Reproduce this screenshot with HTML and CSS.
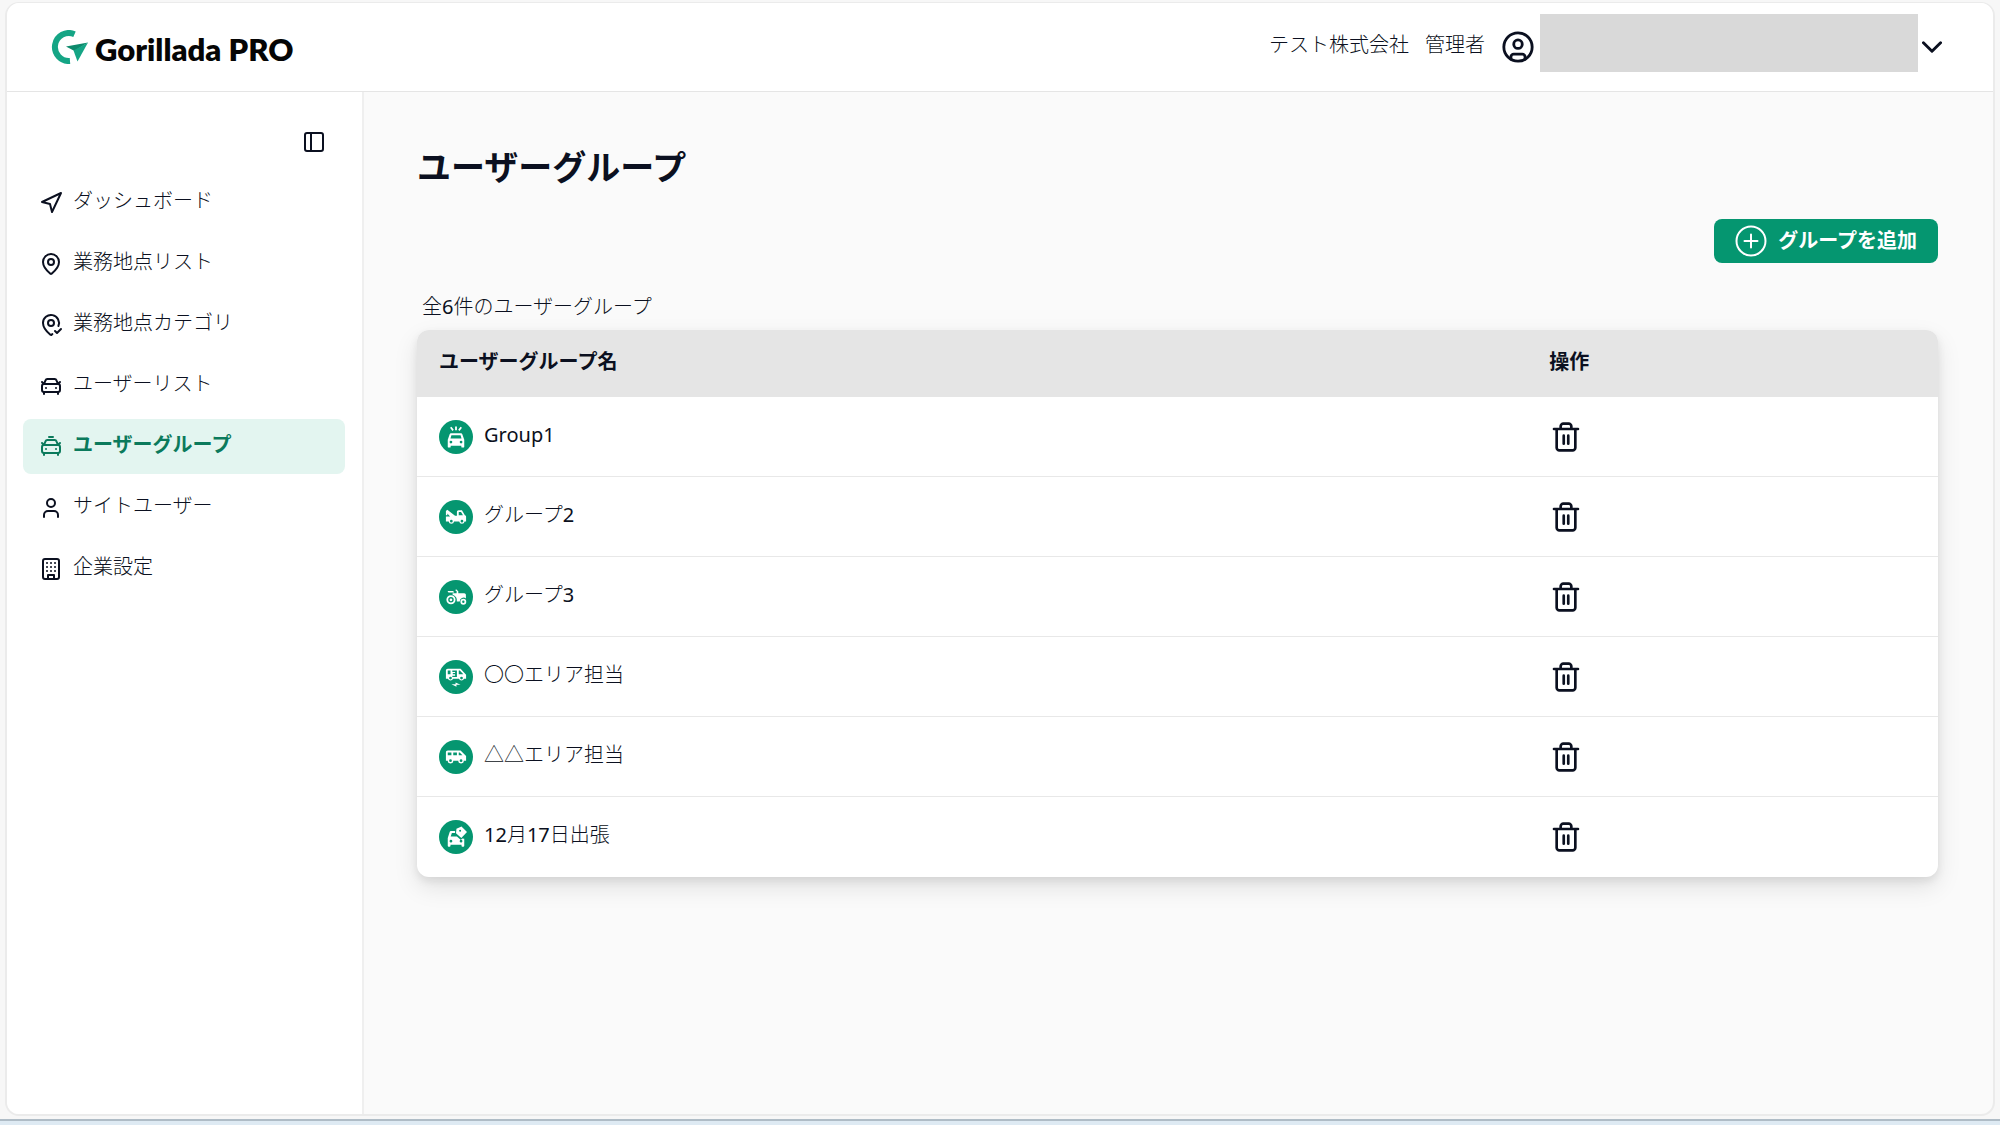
FILE: index.html
```html
<!DOCTYPE html>
<html lang="ja">
<head>
<meta charset="utf-8">
<meta name="viewport" content="width=device-width, initial-scale=1">
<title>ユーザーグループ | Gorillada PRO</title>
<link rel="stylesheet" href="styles.css">
</head>
<body>
<svg class="defs" aria-hidden="true">
  <symbol id="trash" viewBox="0 0 24 24">
    <path d="M3 6h18M19 6v14c0 1-1 2-2 2H7c-1 0-2-1-2-2V6M8 6V4c0-1 1-2 2-2h4c1 0 2 1 2 2v2M10.3 11v6M13.7 11v6"/>
  </symbol>
</svg>
<div class="frame">
  <header class="topbar">
    <a class="brand" href="#">
      <svg class="brand-mark" viewBox="0 0 38 34" aria-hidden="true">
        <path d="M24.500 4.200A14 14 0 1 0 20 31" fill="none" stroke="#15a585" stroke-width="6"/>
        <path d="M38 12.500 16 16.500l8.500 4.500z" fill="#0d8a6c"/>
        <path d="M38 12.500 23.500 20.500 27.500 31.500z" fill="#15a585"/>
      </svg>
      <span class="brand-name">Gorillada PRO</span>
    </a>
    <div class="account">
      <span class="label">テスト株式会社</span>
      <span class="label">管理者</span>
      <button class="account-menu" type="button" aria-label="アカウントメニュー">
        <svg class="avatar line" viewBox="0 0 24 24" aria-hidden="true"><circle cx="12" cy="12" r="10"/><circle cx="12" cy="10" r="3"/><path d="M7 20.660V19a2 2 0 0 1 2-2h6a2 2 0 0 1 2 2v1.660"/></svg>
        <span class="masked"></span>
        <svg class="chevron line" viewBox="5 8 14 8" aria-hidden="true"><path d="m6 9 6 6 6-6"/></svg>
      </button>
    </div>
  </header>
  <div class="body">
    <aside class="sidebar">
      <button class="collapse" type="button" aria-label="サイドバーを閉じる">
        <svg class="icon line" viewBox="0 0 24 24" aria-hidden="true"><rect x="3" y="3" width="18" height="18" rx="2"/><path d="M9 3v18"/></svg>
      </button>
      <nav class="menu">
        <a href="#"><svg class="icon line" viewBox="0 0 24 24" aria-hidden="true"><path d="m3 11 19-9-9 19-2-8z"/></svg><span class="label">ダッシュボード</span></a>
        <a href="#"><svg class="icon line" viewBox="0 0 24 24" aria-hidden="true"><path d="M20 10c0 5-5.500 10.200-7.400 11.800a1 1 0 0 1-1.200 0C9.500 20.200 4 15 4 10a8 8 0 0 1 16 0"/><circle cx="12" cy="10" r="3"/></svg><span class="label">業務地点リスト</span></a>
        <a href="#"><svg class="icon line" viewBox="0 0 24 24" aria-hidden="true"><path d="M19.400 13A8 8 0 1 0 4 10c0 5 5.500 10.200 7.400 11.800.4.3.9.3 1.200 0l.8-.7"/><circle cx="12" cy="10" r="3"/><path d="m16 18 2 2 4-4"/></svg><span class="label">業務地点カテゴリ</span></a>
        <a href="#"><svg class="icon line" viewBox="0 0 24 24" aria-hidden="true"><path d="m21 8-2 2-1.500-3.700A2 2 0 0 0 15.600 5H8.400a2 2 0 0 0-1.900 1.260L5 10 3 8M7 14h.01M17 14h.01M5 18v2M19 18v2"/><rect x="3" y="10" width="18" height="8" rx="2"/></svg><span class="label">ユーザーリスト</span></a>
        <a class="active" href="#" aria-current="page"><svg class="icon line" viewBox="0 0 24 24" aria-hidden="true"><path d="M10 2h4M21 8l-2 2-1.500-3.700A2 2 0 0 0 15.600 5H8.400a2 2 0 0 0-1.900 1.260L5 10 3 8M7 14h.01M17 14h.01M5 18v2M19 18v2"/><rect x="3" y="10" width="18" height="8" rx="2"/></svg><span class="label">ユーザーグループ</span></a>
        <a href="#"><svg class="icon line" viewBox="0 0 24 24" aria-hidden="true"><path d="M19 21v-2a4 4 0 0 0-4-4H9a4 4 0 0 0-4 4v2"/><circle cx="12" cy="7" r="4"/></svg><span class="label">サイトユーザー</span></a>
        <a href="#"><svg class="icon line" viewBox="0 0 24 24" aria-hidden="true"><rect x="4" y="2" width="16" height="20" rx="2"/><path d="M9 22v-4h6v4M8 6h.01M16 6h.01M12 6h.01M12 10h.01M12 14h.01M16 10h.01M16 14h.01M8 10h.01M8 14h.01"/></svg><span class="label">企業設定</span></a>
      </nav>
    </aside>
    <main class="content">
      <h1>ユーザーグループ</h1>
      <div class="actions">
        <button class="add" type="button">
          <svg class="add-icon" viewBox="0 0 32 32" aria-hidden="true"><circle cx="16" cy="16" r="14.500"/><path d="M16 9.500v13M9.500 16h13"/></svg>
          グループを追加
        </button>
      </div>
      <p class="count">全<span class="latin">6</span>件のユーザーグループ</p>
      <table class="groups">
        <thead>
          <tr><th class="name-col" scope="col"><span class="label">ユーザーグループ名</span></th><th scope="col"><span class="label">操作</span></th></tr>
        </thead>
        <tbody>
          <tr>
            <td><div class="group"><span class="badge"><svg viewBox="0 0 24 24" aria-hidden="true"><path fill-rule="evenodd" d="M18.900 9c-.2-.6-.8-1-1.400-1h-11c-.7 0-1.200.4-1.400 1L3 15v7.500c0 .6.400 1 1 1h1.200c.6 0 1-.4 1-1V21.500h11.600v1c0 .6.400 1 1 1H20c.6 0 1-.4 1-1V15zM7 10h10l1 3.500H6zM6.500 19a1.500 1.500 0 1 1 0-3 1.500 1.500 0 0 1 0 3zm11 0a1.500 1.500 0 1 1 0-3 1.500 1.500 0 0 1 0 3zM11 .5h2v4h-2zM5.500 2 7 .9l2.600 3.300L8.100 5.400zM18.500 2 17 .9l-2.600 3.300 1.500 1.200z"/></svg></span><span class="label"><span class="latin">Group1</span></span></div></td>
            <td><button class="delete" type="button" aria-label="Group1を削除"><svg class="line" aria-hidden="true"><use href="#trash"/></svg></button></td>
          </tr>
          <tr>
            <td><div class="group"><span class="badge"><svg viewBox="0 0 24 24" aria-hidden="true"><path fill-rule="evenodd" d="M1 5.500 2.500 4 11 10.500h2V6.500c0-1 .8-1.800 1.800-1.800h3.700l3.200 5.300c.9.200 1.300.9 1.300 1.800V17h-1.600a3 3 0 0 1-5.900 0H9.900a3 3 0 0 1-5.900 0H1v-5.500h4.500L2.600 8.300V10H1zM15 6.500V10h4.600l-2.100-3.500zM6.900 18a1.500 1.500 0 1 0 0-3 1.500 1.500 0 0 0 0 3zm11.600 0a1.500 1.500 0 1 0 0-3 1.500 1.500 0 0 0 0 3z"/></svg></span><span class="label">グループ<span class="latin">2</span></span></div></td>
            <td><button class="delete" type="button" aria-label="グループ2を削除"><svg class="line" aria-hidden="true"><use href="#trash"/></svg></button></td>
          </tr>
          <tr>
            <td><div class="group"><span class="badge"><svg viewBox="0 0 24 24" aria-hidden="true"><path fill-rule="evenodd" d="M3 5.500h5c1 0 1.800.7 2 1.500H4c-.7 0-1-.7-1-1.500zM11.700 8h1V5.800l-1.500-1.300.9-1 2.400 2.200V8H21c1 0 1.800.8 1.800 1.800v3.700a4.200 4.200 0 0 0-6.700 3.300h-3.200A6.300 6.300 0 0 0 8.300 9.500V8h3.400zM6.500 10a5 5 0 1 1 0 10 5 5 0 0 1 0-10zm0 2a3 3 0 1 0 0 6 3 3 0 0 0 0-6zm0 1.500a1.500 1.500 0 1 1 0 3 1.500 1.500 0 0 1 0-3zM20 14a3.200 3.200 0 1 1 0 6.400 3.200 3.200 0 0 1 0-6.400zm0 1.900a1.300 1.300 0 1 0 0 2.600 1.300 1.300 0 0 0 0-2.600z"/></svg></span><span class="label">グループ<span class="latin">3</span></span></div></td>
            <td><button class="delete" type="button" aria-label="グループ3を削除"><svg class="line" aria-hidden="true"><use href="#trash"/></svg></button></td>
          </tr>
          <tr>
            <td><div class="group"><span class="badge"><svg viewBox="0 0 24 24" aria-hidden="true"><path fill-rule="evenodd" d="M17 3H3c-1.100 0-2 .9-2 2v9h2.200a3 3 0 0 0 5.600 0h6.400a3 3 0 0 0 5.600 0H23V9.500zM3 5h3v4H3zm5 0h5v7H8v-1.500h3V9H8.500V7.500H11V6.500H8zm7 0h1.200L20 9h-5zM6 14.700a1.500 1.500 0 1 1 0-3 1.500 1.500 0 0 1 0 3zm12 0a1.500 1.500 0 1 1 0-3 1.500 1.500 0 0 1 0 3zM7 20h4.500v-2l5.500 2.500h-4.500v2z"/></svg></span><span class="label">〇〇エリア担当</span></div></td>
            <td><button class="delete" type="button" aria-label="〇〇エリア担当を削除"><svg class="line" aria-hidden="true"><use href="#trash"/></svg></button></td>
          </tr>
          <tr>
            <td><div class="group"><span class="badge"><svg viewBox="0 0 24 24" aria-hidden="true"><path fill-rule="evenodd" d="M17 5H3c-1.100 0-2 .9-2 2v9h2a3 3 0 0 0 6 0h5.500a3 3 0 0 0 6 0H23v-5zM3 10V7h4v3zm3 7.500a1.500 1.500 0 1 1 0-3 1.500 1.500 0 0 1 0 3zM13 10H9V7h4zm4.500 7.500a1.500 1.500 0 1 1 0-3 1.500 1.500 0 0 1 0 3zM15 10V7h1l3 3z"/></svg></span><span class="label">△△エリア担当</span></div></td>
            <td><button class="delete" type="button" aria-label="△△エリア担当を削除"><svg class="line" aria-hidden="true"><use href="#trash"/></svg></button></td>
          </tr>
          <tr>
            <td><div class="group"><span class="badge"><svg viewBox="0 0 24 24" aria-hidden="true"><path fill-rule="evenodd" d="M11 5.500H6.500c-.7 0-1.200.4-1.400 1L3 13v8.500c0 .6.400 1 1 1h1c.6 0 1-.4 1-1v-1h12v1c0 .6.400 1 1 1h1c.6 0 1-.4 1-1V14l-2-.5-2 1.500-4-3.500H6.200L7.500 7.500H11zM6.500 18a1.500 1.500 0 1 1 0-3 1.500 1.500 0 0 1 0 3zm11 0a1.500 1.500 0 1 1 0-3 1.500 1.500 0 0 1 0 3zM12.500 3l5.500-2.500L24 6.500l-6.200 6.500L12 8zM16.500 4a1.100 1.100 0 1 0 0 2.200 1.100 1.100 0 0 0 0-2.200z"/></svg></span><span class="label"><span class="latin">12</span>月<span class="latin">17</span>日出張</span></div></td>
            <td><button class="delete" type="button" aria-label="12月17日出張を削除"><svg class="line" aria-hidden="true"><use href="#trash"/></svg></button></td>
          </tr>
        </tbody>
      </table>
    </main>
  </div>
</div>
<div class="window-edge"></div>
</body>
</html>
```
FILE: styles.css
```css
* { box-sizing: border-box; }

body {
  margin: 0;
  min-height: 100vh;
  display: flex;
  flex-direction: column;
  background: #f7f7f7;
  color: #0b1020;
  font-family: "Noto Sans", "Noto Sans CJK JP", sans-serif;
  font-size: 20px;
  font-weight: 300;
  line-height: 28px;
}

button {
  border: 0;
  padding: 0;
  background: none;
  color: inherit;
  font: inherit;
  cursor: pointer;
}

a { color: inherit; text-decoration: none; }
svg { display: block; flex: none; }
.defs { position: absolute; width: 0; height: 0; }

.line {
  fill: none;
  stroke: currentColor;
  stroke-width: 2;
  stroke-linecap: round;
  stroke-linejoin: round;
}

.icon { width: 24px; height: 24px; }

/* Labels sit slightly above the centre line of the icon beside them */
.label { display: block; padding-bottom: 4px; }
.latin { font-weight: 400; }

.frame {
  flex: 1;
  display: flex;
  flex-direction: column;
  margin: 2px 5px 3px;
  border: 2px solid #ebebeb;
  border-top-width: 1px;
  border-radius: 14px;
  background: #fafafa;
  overflow: hidden;
}

.topbar {
  display: flex;
  justify-content: space-between;
  align-items: center;
  height: 89px;
  padding: 0 51px 0 43px;
  border-bottom: 1px solid #e5e5e5;
  background: #fff;
}

.brand { display: flex; align-items: center; gap: 7px; }
.brand-mark { width: 38px; height: 34px; }
.brand-name {
  padding-top: 4px;
  color: #050505;
  font-family: Lato, sans-serif;
  font-size: 31px;
  font-weight: 800;
  line-height: 40px;
}

.account { display: flex; align-items: center; gap: 16px; }
.account-menu { display: flex; align-items: center; }
.avatar { width: 34px; height: 34px; margin-right: 5px; }
.masked { width: 378px; height: 58px; margin: 0 4px 8px 0; background: #d9d9d9; }
.chevron { width: 20px; height: 12px; }

.body { flex: 1; display: flex; }

.sidebar {
  flex: none;
  width: 357px;
  padding: 38px 17px 16px 16px;
  border-right: 2px solid #efefef;
  background: #fff;
}

.collapse { display: block; margin: 0 19px 21px auto; }

.menu { display: flex; flex-direction: column; gap: 6px; }
.menu a {
  display: flex;
  align-items: center;
  gap: 10px;
  height: 55px;
  padding: 0 16px;
  border-radius: 8px;
}
.menu .active { background: #e3f5f0; color: #0b7a5c; font-weight: 700; }

.content { flex: 1; padding: 50px 55px 50px 53px; }

h1 { margin: 0; font-size: 34px; font-weight: 700; line-height: 50px; }

.actions { display: flex; justify-content: flex-end; margin-top: 27px; }
.add {
  display: flex;
  align-items: center;
  gap: 11px;
  height: 44px;
  padding: 0 21px;
  border-radius: 8px;
  background: #059670;
  color: #fff;
  font-weight: 700;
}
.add-icon {
  width: 32px;
  height: 32px;
  fill: none;
  stroke: currentColor;
  stroke-width: 2;
  stroke-linecap: round;
}

.count { margin: 30px 5px 9px; }

.groups {
  width: 100%;
  border-spacing: 0;
  border-radius: 12px;
  background: #fff;
  box-shadow: 0 10px 24px rgba(0, 0, 0, .1), 0 4px 8px rgba(0, 0, 0, .08);
  overflow: hidden;
}
.groups th, .groups td { padding: 0 22px; text-align: left; }
.groups th { height: 67px; background: #e5e5e5; font-weight: 700; }
.groups td { height: 80px; border-bottom: 1px solid #e8e8e8; }
.groups tr:last-child td { border-bottom: 0; }
.name-col { width: 73%; }

.group { display: flex; align-items: center; gap: 11px; }
.badge {
  display: grid;
  place-items: center;
  width: 34px;
  height: 34px;
  border-radius: 50%;
  background: #059670;
}
.badge svg { width: 22px; height: 22px; fill: #fff; }

.delete { display: block; }
.delete svg { width: 34px; height: 32px; }

.window-edge { height: 6px; border-top: 2px solid #afbcc6; background: #deeaf3; }
```
